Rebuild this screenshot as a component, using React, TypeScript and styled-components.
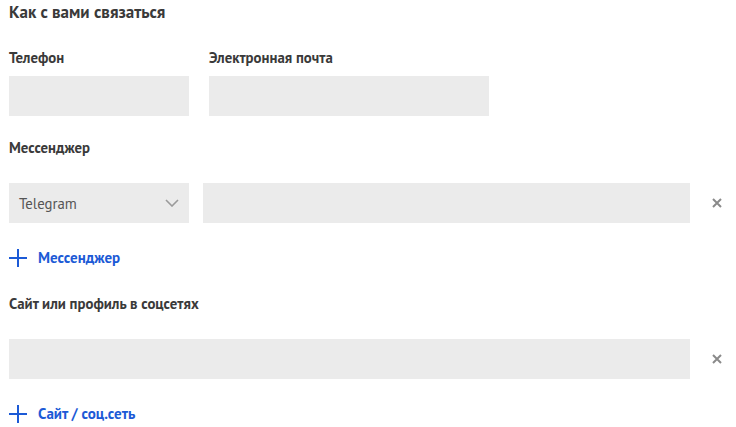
import React from "react";
import styled, { createGlobalStyle } from "styled-components";

const Global = createGlobalStyle`
  html, body { margin: 0; padding: 0; background: #fff; overflow: hidden; }
  body { font-family: "PT Sans", Roboto, "Noto Sans", sans-serif; color: #3a3a3a; }
  * { box-sizing: border-box; }
`;

const Page = styled.div`
  width: 760px;
  padding: 0 9px;
`;

const Title = styled.h2`
  margin: 0;
  font-size: 17px;
  line-height: 24px;
  font-weight: 700;
  color: #3a3a3a;
`;

const Row = styled.div<{ $top: number }>`
  display: flex;
  gap: 20px;
  margin-top: ${(p) => p.$top}px;
`;

const Field = styled.div<{ $w: number }>`
  display: flex;
  flex-direction: column;
  width: ${(p) => p.$w}px;
`;

const Label = styled.div<{ $gap: number }>`
  font-size: 14.8px;
  line-height: 18px;
  font-weight: 700;
  color: #3a3a3a;
  margin-bottom: ${(p) => p.$gap}px;
`;

const Input = styled.div`
  height: 40px;
  background: #ebebeb;
  flex: 1 1 auto;
`;

const Section = styled.div<{ $top: number }>`
  margin-top: ${(p) => p.$top}px;
`;

const InputLine = styled.div`
  display: flex;
  align-items: center;
  width: 735px;
`;

const Select = styled.div`
  width: 180px;
  height: 40px;
  flex: none;
  background: #ebebeb;
  display: flex;
  align-items: center;
  justify-content: space-between;
  padding: 0 10px 0 10px;
  font-size: 14.8px;
  color: #555;
  margin-right: 14px;
`;

const Remove = styled.button`
  width: 54px;
  height: 40px;
  flex: none;
  border: 0;
  background: none;
  padding: 0;
  display: flex;
  align-items: center;
  justify-content: center;
  cursor: pointer;
`;

const AddButton = styled.button<{ $top: number }>`
  margin-top: ${(p) => p.$top}px;
  display: flex;
  align-items: center;
  gap: 11px;
  border: 0;
  background: none;
  padding: 0;
  font-family: inherit;
  font-size: 15px;
  font-weight: 700;
  color: #1c5ad6;
  line-height: 18px;
  cursor: pointer;
`;

const Plus = () => (
  <svg width="18" height="18" viewBox="0 0 18 18">
    <path d="M9 0v18M0 9h18" stroke="#1c5ad6" strokeWidth="2" />
  </svg>
);

const Cross = () => (
  <svg width="10" height="10" viewBox="0 0 10 10">
    <path d="M1 1l8 8M9 1l-8 8" stroke="#8a8a8a" strokeWidth="2" />
  </svg>
);

const Chevron = () => (
  <svg width="14" height="8" viewBox="0 0 14 8">
    <path d="M1 1l6 6 6-6" stroke="#9a9a9a" strokeWidth="1.6" fill="none" />
  </svg>
);

export default function App() {
  return (
    <Page>
      <Global />
      <Title>Как с вами связаться</Title>
      <Row $top={25}>
        <Field $w={180}>
          <Label $gap={9}>Телефон</Label>
          <Input />
        </Field>
        <Field $w={280}>
          <Label $gap={9}>Электронная почта</Label>
          <Input />
        </Field>
      </Row>
      <Section $top={23}>
        <Label $gap={26}>Мессенджер</Label>
        <InputLine>
          <Select>
            <span>Telegram</span>
            <Chevron />
          </Select>
          <Input />
          <Remove aria-label="Удалить">
            <Cross />
          </Remove>
        </InputLine>
        <AddButton $top={26}>
          <Plus />
          Мессенджер
        </AddButton>
      </Section>
      <Section $top={28}>
        <Label $gap={26}>Сайт или профиль в соцсетях</Label>
        <InputLine>
          <Input />
          <Remove aria-label="Удалить">
            <Cross />
          </Remove>
        </InputLine>
        <AddButton $top={26}>
          <Plus />
          Сайт / соц.сеть
        </AddButton>
      </Section>
    </Page>
  );
}
